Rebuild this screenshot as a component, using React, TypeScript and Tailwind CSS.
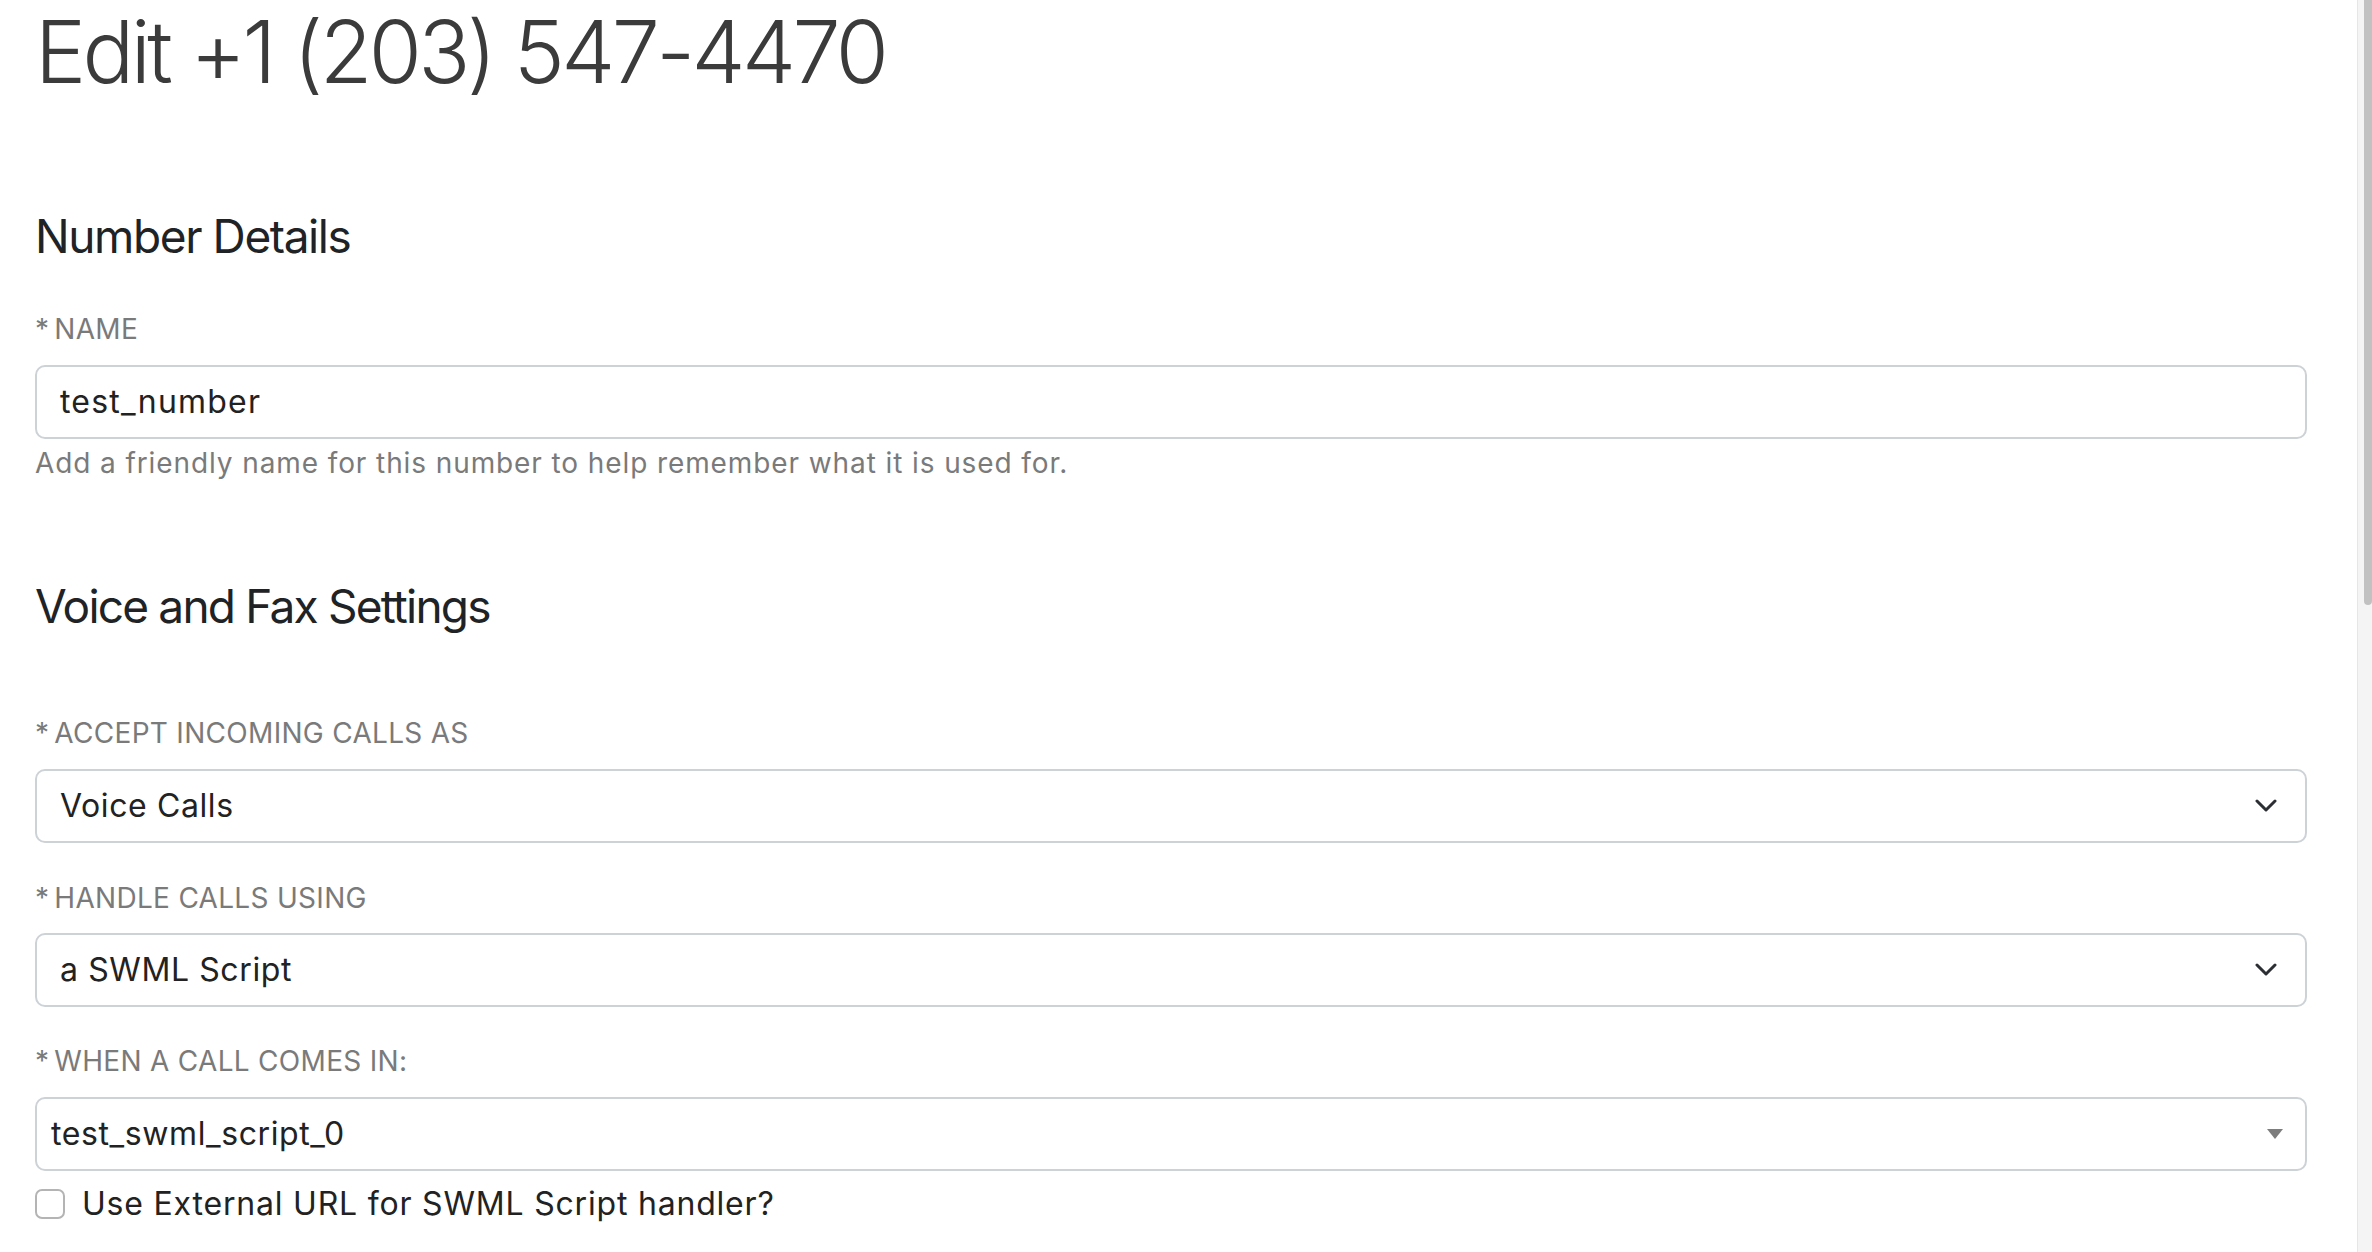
import React from "react";

const font = { fontFamily: "Inter, 'Open Sans', sans-serif" };

function Label({ children, className = "" }: { children: React.ReactNode; className?: string }) {
  return (
    <div className={`text-[28px] leading-[36px] uppercase tracking-[0.3px] text-[#7a7a7a] ${className}`}>
      <span className="mr-[5px]">*</span>
      {children}
    </div>
  );
}

function Chevron() {
  return (
    <svg width="22" height="14" viewBox="0 0 22 14" fill="none">
      <path d="M2 2l9 9 9-9" stroke="#2b2f33" strokeWidth="3" strokeLinecap="round" strokeLinejoin="round" />
    </svg>
  );
}

function SelectBox({ value, caret = "chevron" }: { value: string; caret?: "chevron" | "triangle" }) {
  const triangle = caret === "triangle";
  return (
    <div
      className={`flex h-[74px] items-center justify-between rounded-[10px] border-2 border-[#cdd2d7] bg-white text-[32px] tracking-[0.6px] text-[#222] ${
        triangle ? "pl-[14px] pr-[22px]" : "pl-[23px] pr-[28px]"
      }`}
    >
      <span>{value}</span>
      {triangle ? (
        <svg width="16" height="10" viewBox="0 0 16 10">
          <path d="M0 0h16L8 10z" fill="#7d7d7d" />
        </svg>
      ) : (
        <Chevron />
      )}
    </div>
  );
}

export default function App() {
  return (
    <div className="flex h-[1252px] w-[2372px] overflow-hidden bg-white" style={font}>
      <main className="flex-1 pl-[35px] pr-[50px]">
        <h1 className="text-[86px] font-light leading-[104px] tracking-[-3.6px] text-[#3b3b3b]">Edit +1 (203) 547-4470</h1>

        {/* Number details */}
        <section>
          <h2 className="mt-[104px] text-[46px] leading-[56px] tracking-[-1.4px] text-[#1f2326]">Number Details</h2>
          <Label className="mt-[47px]">Name</Label>
          <div className="mt-[18px] flex h-[74px] items-center rounded-[10px] border-2 border-[#cdd2d7] bg-white pl-[23px] text-[32px] tracking-[1.2px] text-[#222]">
            test_number
          </div>
          <p className="mt-[6px] text-[28px] leading-[36px] tracking-[0.9px] text-[#7a7a7a]">
            Add a friendly name for this number to help remember what it is used for.
          </p>
        </section>

        {/* Voice and fax */}
        <section>
          <h2 className="mt-[97px] text-[46px] leading-[56px] tracking-[-1.8px] text-[#1f2326]">Voice and Fax Settings</h2>
          <Label className="mt-[81px]">Accept incoming calls as</Label>
          <div className="mt-[18px]">
            <SelectBox value="Voice Calls" />
          </div>
          <Label className="mt-[37px]">Handle calls using</Label>
          <div className="mt-[17px]">
            <SelectBox value="a SWML Script" />
          </div>
          <Label className="mt-[36px]">When a call comes in:</Label>
          <div className="mt-[18px]">
            <SelectBox value="test_swml_script_0" caret="triangle" />
          </div>
          <label className="mt-[15px] flex items-center gap-[17px]">
            <span className="h-[30px] w-[30px] rounded-[7px] border-2 border-[#b4b4b4] bg-white" />
            <span className="text-[32px] leading-[36px] tracking-[0.8px] text-[#222]">Use External URL for SWML Script handler?</span>
          </label>
        </section>
      </main>

      {/* scrollbar */}
      <div className="w-[15px] border-l border-[#e6e6e6] bg-[#f4f4f4] pl-[6px]">
        <div className="h-[605px] rounded-b-[6px] bg-[#c1c1c1]" />
      </div>
    </div>
  );
}
